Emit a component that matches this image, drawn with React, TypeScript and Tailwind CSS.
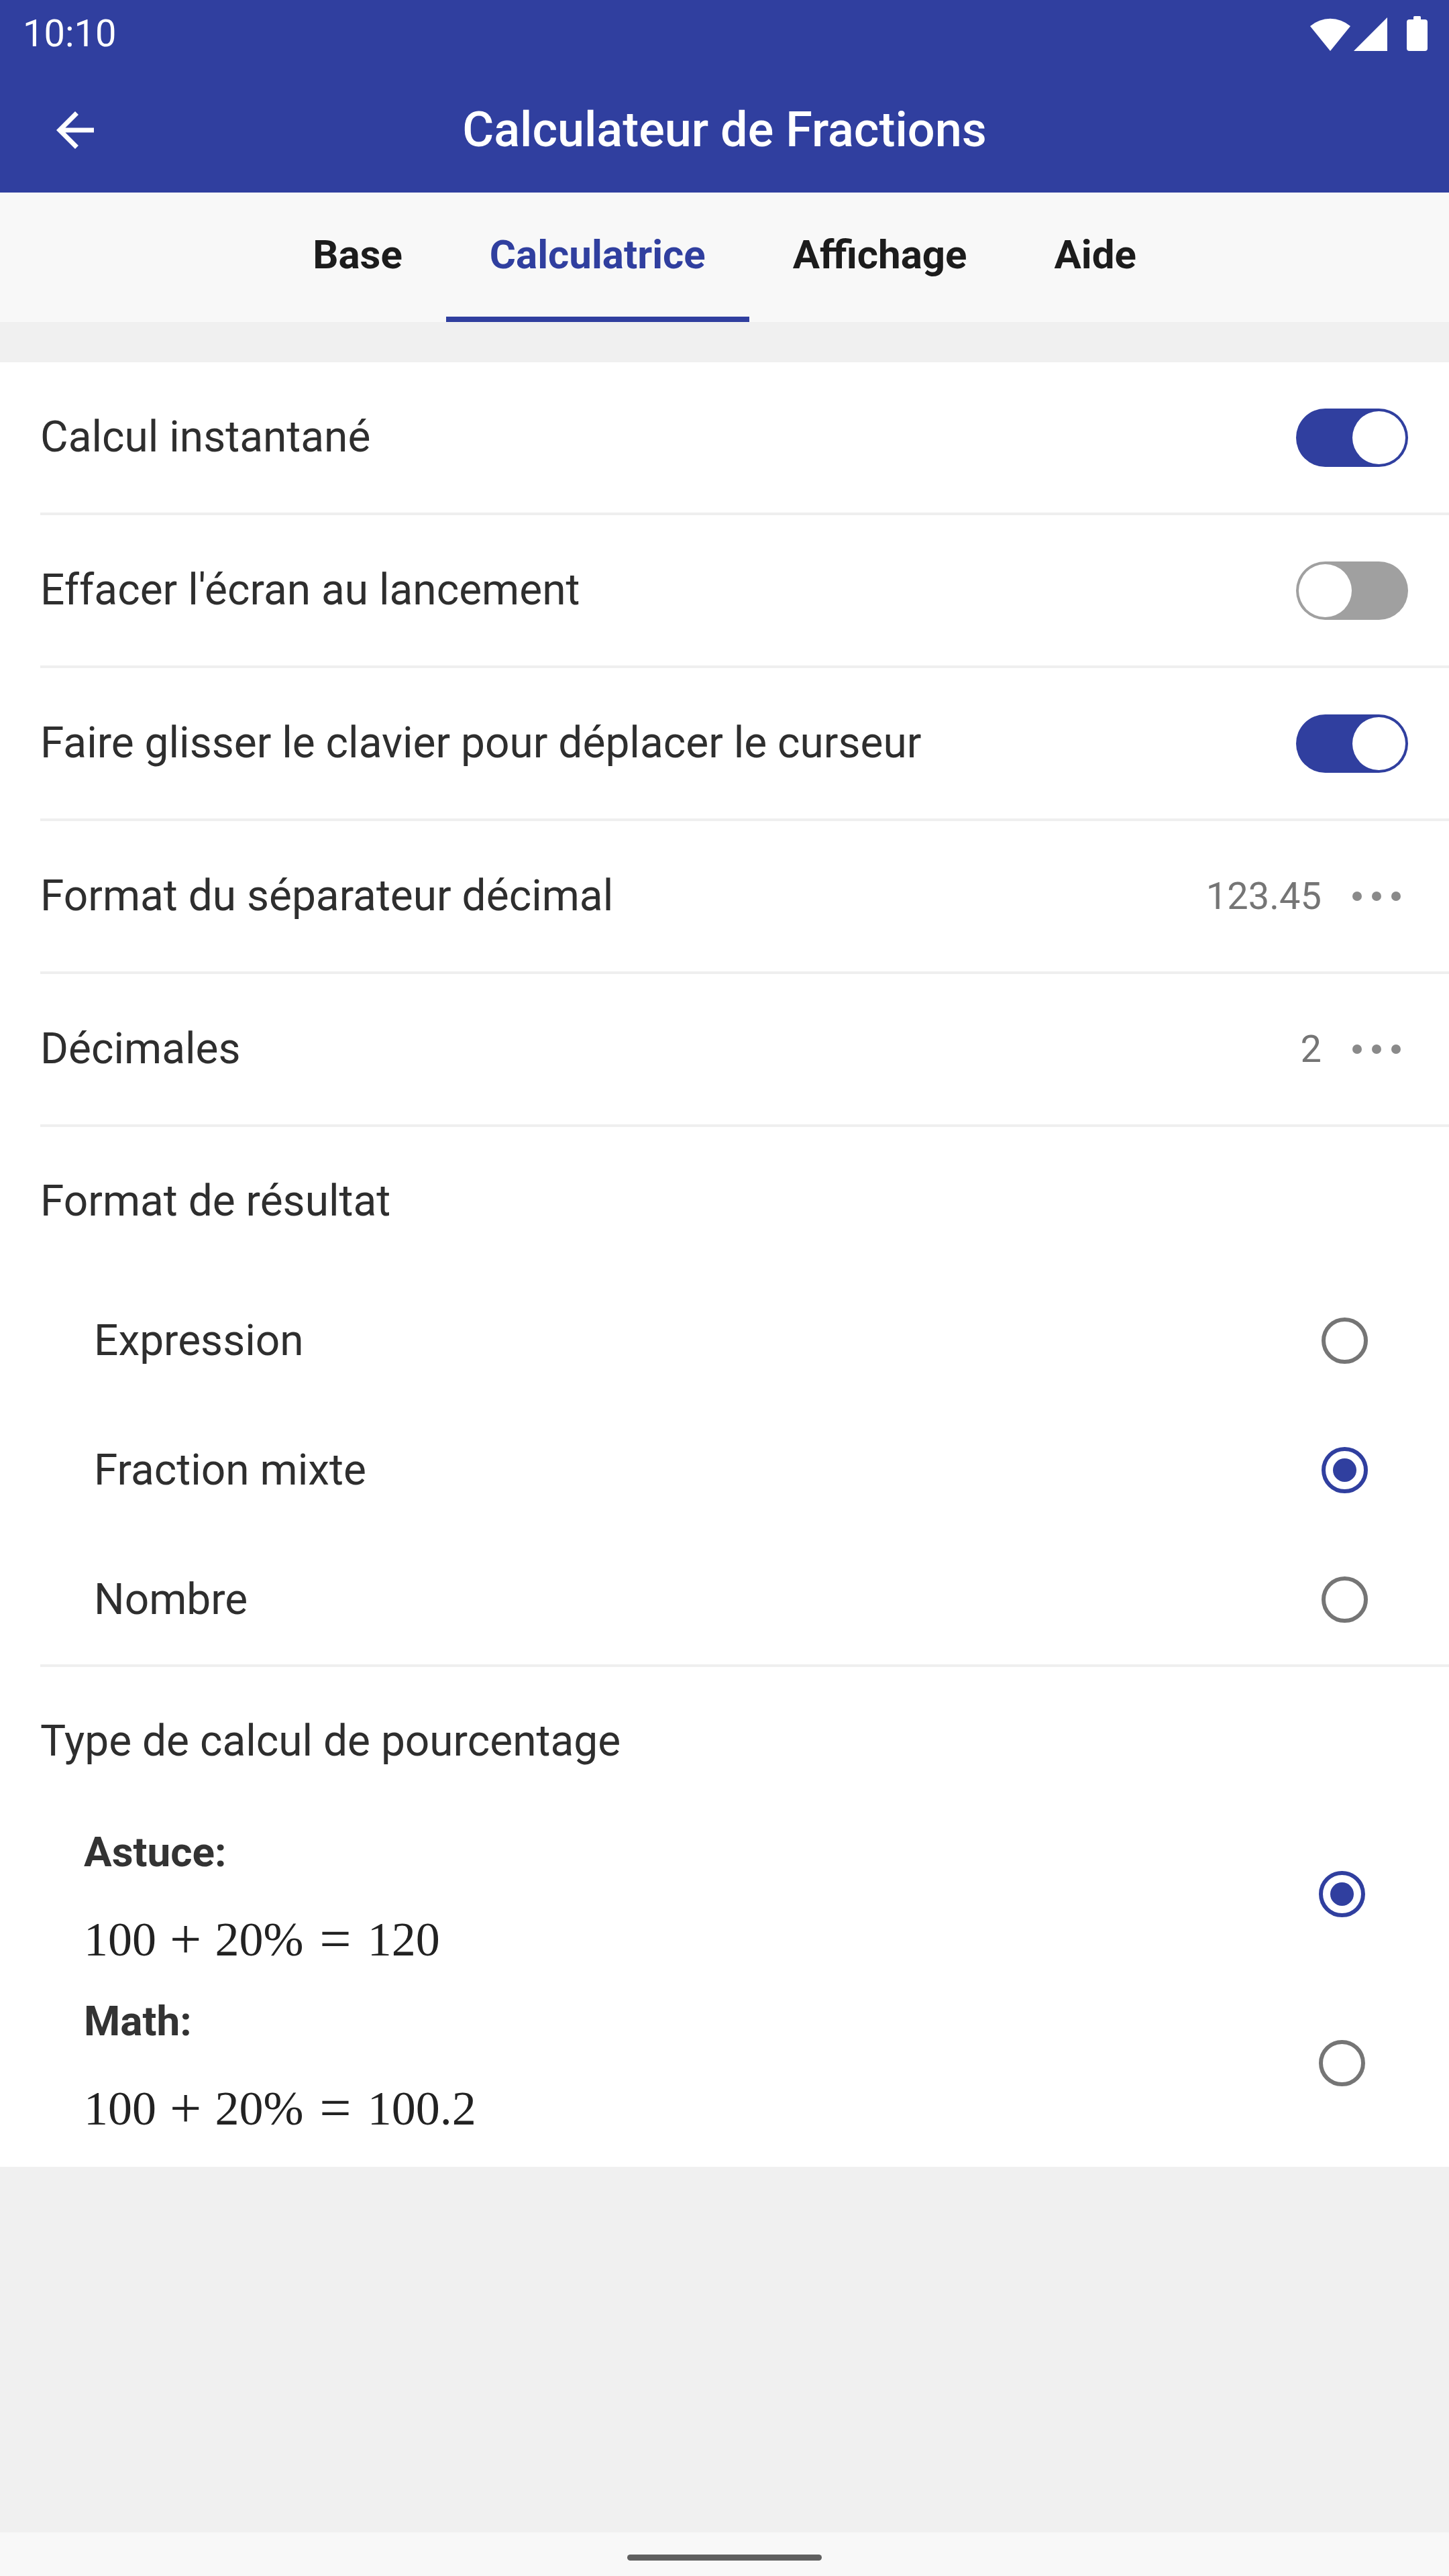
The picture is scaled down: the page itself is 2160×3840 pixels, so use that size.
import React from 'react';

const settings = [
  { label: 'Calcul instantané', on: true },
  { label: "Effacer l'écran au lancement", on: false },
  { label: 'Faire glisser le clavier pour déplacer le curseur', on: true },
];

const values = [
  { label: 'Format du séparateur décimal', value: '123.45' },
  { label: 'Décimales', value: '2' },
];

const formats = [
  { label: 'Expression', checked: false },
  { label: 'Fraction mixte', checked: true },
  { label: 'Nombre', checked: false },
];

const Toggle = ({ on }: { on: boolean }) => (
  <div
    className={`w-[167px] h-[87px] rounded-full p-[4px] flex ${
      on ? 'bg-[#303f9f] justify-end' : 'bg-[#a0a0a0] justify-start'
    }`}
  >
    <div className="w-[79px] h-[79px] rounded-full bg-white" />
  </div>
);

const Radio = ({ checked }: { checked: boolean }) => (
  <div
    className={`w-[69px] h-[69px] rounded-full border-[6px] flex items-center justify-center ${
      checked ? 'border-[#303f9f]' : 'border-[#757575]'
    }`}
  >
    {checked && <div className="w-[35px] h-[35px] rounded-full bg-[#303f9f]" />}
  </div>
);

const Dots = () => (
  <div className="flex items-center gap-[15px]">
    <span className="w-[14px] h-[14px] rounded-full bg-[#8a8a8a]" />
    <span className="w-[14px] h-[14px] rounded-full bg-[#8a8a8a]" />
    <span className="w-[14px] h-[14px] rounded-full bg-[#8a8a8a]" />
  </div>
);

// formule type KaTeX : 100 + 20% = 120
const Formula = ({ result }: { result: string }) => (
  <div className="flex items-center font-['Liberation_Serif',serif] text-[72px] text-[#222] leading-none">
    <span>100</span>
    <span className="mx-[20px] text-[84px] font-light">+</span>
    <span>20%</span>
    <span className="mx-[24px] text-[84px] font-light">=</span>
    <span>{result}</span>
  </div>
);

const StatusBar = () => (
  <div className="h-[100px] flex items-center justify-between pl-[34px] pr-[32px] text-white">
    <span className="text-[56px] leading-none">10:10</span>
    <div className="flex items-end gap-[5px]">
      <svg width="60" height="50" viewBox="0 0 60 50">
        <path d="M0 13 A46 46 0 0 1 60 13 L30 50 Z" fill="white" />
      </svg>
      <svg width="50" height="50" viewBox="0 0 50 50">
        <path d="M0 50 L50 50 L50 0 Z" fill="white" />
      </svg>
      <svg width="31" height="52" viewBox="0 0 31 52" className="ml-[24px]">
        <rect x="10" y="0" width="11" height="8" rx="1.5" fill="white" />
        <rect x="0" y="5" width="31" height="47" rx="4" fill="white" />
      </svg>
    </div>
  </div>
);

export default function App() {
  return (
    <div className="w-[2160px] h-[3840px] flex flex-col bg-[#f0f0f0] font-['Roboto',sans-serif]">
      <header className="bg-[#303f9f]">
        <StatusBar />
        <div className="h-[187px] grid grid-cols-[224px_1fr_224px] items-center">
          <div className="pl-[70px]">
            <svg width="84" height="84" viewBox="0 0 24 24">
              <path d="M20 11H7.83l5.59-5.59L12 4l-8 8 8 8 1.41-1.41L7.83 13H20v-2z" fill="white" />
            </svg>
          </div>
          <h1 className="text-center text-white text-[72px] font-medium leading-none">
            Calculateur de Fractions
          </h1>
          <div />
        </div>
      </header>

      <nav className="h-[193px] bg-[#f8f8f8] flex justify-center">
        {['Base', 'Calculatrice', 'Affichage', 'Aide'].map((tab) => {
          const active = tab === 'Calculatrice';
          return (
            <div
              key={tab}
              className={`px-[65px] flex items-center border-b-[8px] text-[60px] font-bold leading-none ${
                active ? 'border-[#303f9f] text-[#303f9f]' : 'border-transparent text-[#1c1c1c]'
              }`}
            >
              {tab}
            </div>
          );
        })}
      </nav>

      <div className="h-[60px]" />

      <main className="bg-white text-[64px] text-[#2e2e2e] leading-none">
        {settings.map((s) => (
          <div
            key={s.label}
            className="ml-[60px] h-[228px] border-b-[4px] border-[#efefef] flex items-center justify-between pr-[61px]"
          >
            <span>{s.label}</span>
            <Toggle on={s.on} />
          </div>
        ))}

        {values.map((v) => (
          <div
            key={v.label}
            className="ml-[60px] h-[228px] border-b-[4px] border-[#efefef] flex items-center justify-between pr-[72px]"
          >
            <span>{v.label}</span>
            <div className="flex items-center gap-[46px]">
              <span className="text-[56px] text-[#757575]">{v.value}</span>
              <Dots />
            </div>
          </div>
        ))}

        <section className="ml-[60px] border-b-[4px] border-[#efefef]">
          <div className="h-[222px] flex items-center">Format de résultat</div>
          {formats.map((f) => (
            <div key={f.label} className="h-[193px] flex items-center justify-between pl-[80px] pr-[121px]">
              <span>{f.label}</span>
              <Radio checked={f.checked} />
            </div>
          ))}
        </section>

        <section className="ml-[60px] pb-[19px]">
          <div className="h-[222px] flex items-center">Type de calcul de pourcentage</div>
          {[
            { label: 'Astuce:', result: '120', checked: true },
            { label: 'Math:', result: '100.2', checked: false },
          ].map((o) => (
            <div key={o.label} className="h-[252px] flex items-center justify-between pl-[65px] pr-[125px]">
              <div className="flex flex-col pt-[14px] pb-[18px]">
                <div className="h-[80px] flex items-center font-bold text-[62px] text-[#333]">{o.label}</div>
                <div className="h-[100px] mt-[40px] flex items-center">
                  <Formula result={o.result} />
                </div>
              </div>
              <div className="mb-[20px]">
                <Radio checked={o.checked} />
              </div>
            </div>
          ))}
        </section>
      </main>

      <div className="flex-1" />

      <div className="h-[65px] bg-[#f8f8f8] flex justify-center pt-[33px]">
        <div className="w-[290px] h-[9px] rounded-full bg-[#606060]" />
      </div>
    </div>
  );
}
